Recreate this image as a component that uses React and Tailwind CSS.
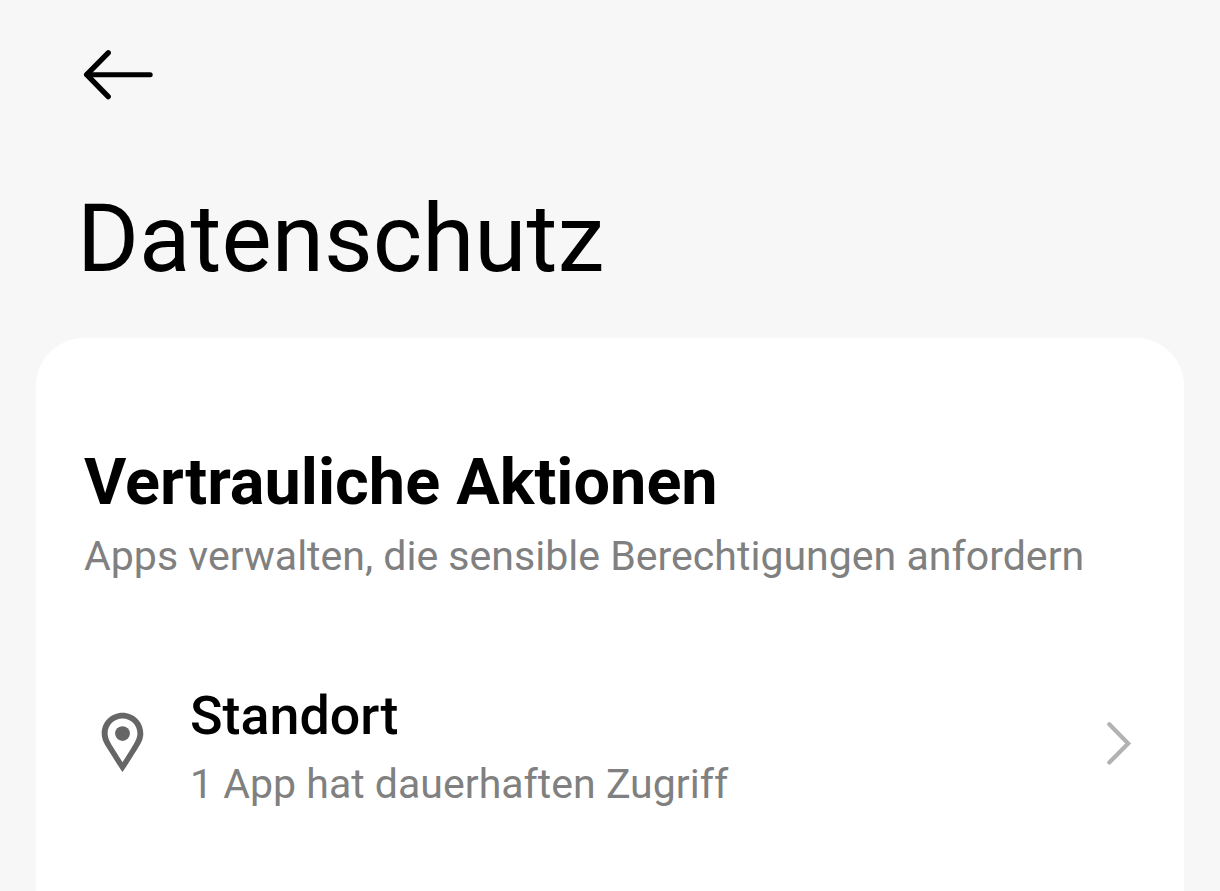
import React from "react";

function BackIcon() {
  return (
    <svg className="block h-[52px] w-[72px]" viewBox="0 0 72 52" fill="none">
      <path
        d="M26.2 3.8 L4.7 25.7 L26.2 47.6"
        stroke="#000000"
        strokeWidth="5.4"
        strokeLinecap="round"
        strokeLinejoin="round"
      />
      <path d="M5 25.7 H68.2" stroke="#000000" strokeWidth="5" strokeLinecap="round" />
    </svg>
  );
}

function PinIcon() {
  return (
    <svg className="mb-0.5 block h-[60px] w-[44px]" viewBox="0 0 44 60" fill="#666666">
      <path
        fillRule="evenodd"
        d="M21.5 0.7 C10 0.7 0.7 10 0.7 21.3 C0.7 28 3.5 32 7.3 38 C11 44 17 53.5 21.5 60 C26 53.5 32 44 35.7 38 C39.5 32 42.3 28 42.3 21.3 C42.3 10 33 0.7 21.5 0.7 Z M21.5 6.6 C29.8 6.6 36.4 13.2 36.4 21.3 C36.4 26.5 33.5 31 30.3 36.3 L21.5 50.2 L12.7 36.3 C9.5 31 6.6 26.5 6.6 21.3 C6.6 13.2 13.2 6.6 21.5 6.6 Z"
      />
      <circle cx="21.5" cy="21.6" r="7.4" />
    </svg>
  );
}

function ChevronIcon() {
  return (
    <svg className="block h-[44px] w-[26px]" viewBox="0 0 26 44" fill="none">
      <path
        d="M3.3 3.3 L22.2 22.4 L3.3 41.4"
        stroke="#b2b2b2"
        strokeWidth="4.2"
        strokeLinecap="round"
      />
    </svg>
  );
}

/**
 * A single permission entry with an icon, a title and a short status.
 */
function PermissionRow(props) {
  const { icon, title, status } = props;

  return (
    <div className="mt-[77px] flex items-center pr-[52px] pl-[65px]">
      {icon}
      <div className="ml-[45px] flex-1 pt-[12px]">
        <h3 className="text-[53.8px] leading-[70px] font-medium text-black">{title}</h3>
        <p className="text-[41.05px] leading-[66px] text-[#808080]">{status}</p>
      </div>
      <ChevronIcon />
    </div>
  );
}

export default function App() {
  return (
    <div className="flex h-[891px] w-[1220px] flex-col overflow-hidden bg-[#f7f7f7] font-['Roboto',sans-serif] whitespace-nowrap">
      {/* Header Section */}
      <header className="h-[338px] shrink-0 px-[82px] pt-[49px]">
        <button className="block" aria-label="Zurück">
          <BackIcon />
        </button>
        <h1 className="mt-[82px] -ml-[5px] text-[94.6px] leading-[112px] font-normal text-black">
          Datenschutz
        </h1>
      </header>

      {/* Permissions Section */}
      <main className="mx-9 flex-1 rounded-t-[48px] bg-white pt-[105px]">
        <div className="pl-12">
          <h2 className="text-[64.8px] leading-[78px] font-bold text-black">Vertrauliche Aktionen</h2>
          <p className="text-[41.07px] leading-[71px] text-[#808080]">
            Apps verwalten, die sensible Berechtigungen anfordern
          </p>
        </div>
        <PermissionRow icon={<PinIcon />} title="Standort" status="1 App hat dauerhaften Zugriff" />
      </main>
    </div>
  );
}
